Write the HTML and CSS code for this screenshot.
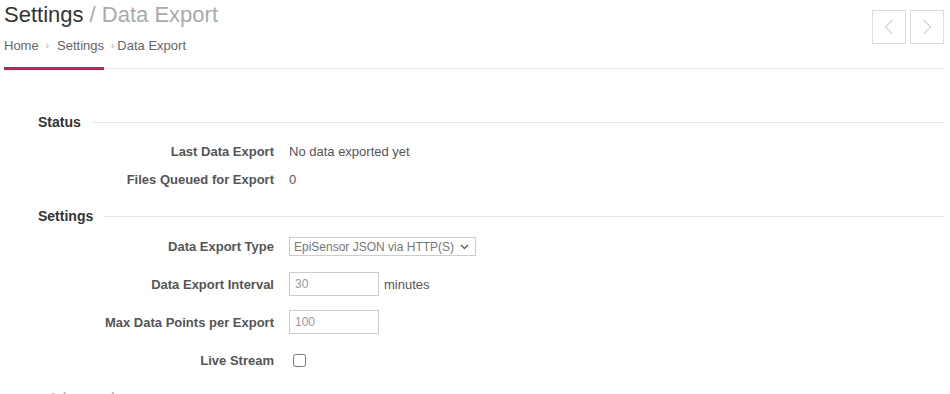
FILE: index.html
```html
<!DOCTYPE html>
<html lang="en">
<head>
<meta charset="utf-8">
<title>Settings / Data Export</title>
<link rel="stylesheet" href="styles.css">
</head>
<body>
<header class="page-header">
  <div class="titles">
    <h1 class="title">Settings <span class="title-sub">/ Data Export</span></h1>
    <nav class="breadcrumb">
      <a href="#">Home</a><span class="sep sep-first">›</span><a href="#">Settings</a><span class="sep sep-last">›</span><span class="current">Data Export</span>
    </nav>
  </div>
  <div class="pager">
    <button class="pager-btn" aria-label="Previous">
      <svg width="10" height="16" viewBox="0 0 10 16"><polyline points="8.5,1 1.5,8 8.5,15" fill="none" stroke="#b5b5b5" stroke-width="1"/></svg>
    </button>
    <button class="pager-btn" aria-label="Next">
      <svg width="10" height="16" viewBox="0 0 10 16"><polyline points="1.5,1 8.5,8 1.5,15" fill="none" stroke="#b5b5b5" stroke-width="1"/></svg>
    </button>
  </div>
</header>
<div class="tabbar"><div class="tab"></div></div>

<main class="content">
  <section class="section">
    <h2 class="section-title"><span>Status</span></h2>
    <div class="row short">
      <div class="label">Last Data Export</div>
      <div class="value">No data exported yet</div>
    </div>
    <div class="row short">
      <div class="label">Files Queued for Export</div>
      <div class="value">0</div>
    </div>
  </section>

  <section class="section settings">
    <h2 class="section-title"><span>Settings</span></h2>
    <div class="row first">
      <div class="label">Data Export Type</div>
      <div class="value">
        <span class="select-wrap">
          <select class="select">
            <option>EpiSensor JSON via HTTP(S)</option>
          </select>
          <svg class="select-arrow" width="9" height="6" viewBox="0 0 9 6"><polyline points="1,1 4.5,4.5 8,1" fill="none" stroke="#666" stroke-width="1.5"/></svg>
        </span>
      </div>
    </div>
    <div class="row">
      <div class="label">Data Export Interval</div>
      <div class="value"><input class="input" type="text" value="30"><span class="unit">minutes</span></div>
    </div>
    <div class="row">
      <div class="label">Max Data Points per Export</div>
      <div class="value"><input class="input" type="text" value="100"></div>
    </div>
    <div class="row">
      <div class="label">Live Stream</div>
      <div class="value"><input class="checkbox" type="checkbox"></div>
    </div>
  </section>

  <section class="section advanced">
    <h2 class="section-title"><span>Advanced</span></h2>
  </section>
</main>
</body>
</html>
```
FILE: styles.css
```css
html {
  overflow: hidden;
}
body {
  margin: 0;
  background: #fff;
  font-family: "Liberation Sans", Arial, Helvetica, sans-serif;
  color: #555;
}
.page-header {
  display: flex;
  justify-content: space-between;
  align-items: flex-start;
  padding: 0 6px 0 4px;
}
.title {
  margin: 2px 0 0;
  font-size: 22px;
  line-height: 26px;
  font-weight: normal;
  color: #333;
}
.title-sub {
  color: #aaa;
}
.breadcrumb {
  margin-top: 8px;
  font-size: 13px;
  line-height: 19px;
  color: #666;
}
.breadcrumb a {
  color: #666;
  text-decoration: none;
}
.breadcrumb .sep {
  display: inline-block;
  font-size: 10px;
  color: #aaa;
  vertical-align: 1px;
}
.breadcrumb .sep-first {
  margin: 0 8px 0 7px;
}
.breadcrumb .sep-last {
  margin: 0 3px 0 7px;
}
.pager {
  display: flex;
  gap: 4px;
  margin-top: 10px;
}
.pager-btn {
  width: 34px;
  height: 34px;
  padding: 0;
  border: 1px solid #ddd;
  background: #fff;
  display: flex;
  align-items: center;
  justify-content: center;
}
.tabbar {
  display: flex;
  margin: 12px 6px 0 4px;
  border-bottom: 1px solid #e6e6e6;
}
.tab {
  width: 100px;
  height: 0;
  border-bottom: 3px solid #d0195b;
  margin-bottom: -2px;
}
.content {
  padding: 43px 6px 0 38px;
}
.section-title {
  display: flex;
  align-items: center;
  margin: 0;
  height: 20px;
  font-size: 14px;
  font-weight: bold;
  color: #333;
}
.section-title::after {
  content: "";
  flex: 1;
  height: 1px;
  margin-left: 11px;
  background: #e8e8e8;
}
.row {
  display: grid;
  grid-template-columns: 236px 1fr;
  column-gap: 15px;
  align-items: center;
  height: 38px;
  font-size: 13px;
}
.row.first {
  height: 37px;
}
.row.short {
  height: 28px;
}
.section .row.short:first-of-type {
  margin-top: 5px;
}
.label {
  text-align: right;
  font-weight: bold;
  color: #555;
}
.value {
  display: flex;
  align-items: center;
  color: #555;
}
.settings {
  margin-top: 13px;
}
.settings .section-title {
  margin-bottom: 2px;
}
.select-wrap {
  position: relative;
  display: inline-block;
}
.select {
  appearance: none;
  -webkit-appearance: none;
  width: 187px;
  height: 19px;
  margin: 0;
  padding: 0 0 0 4px;
  border: 1px solid #ccc;
  border-radius: 0;
  background: #fff;
  font-family: "Liberation Sans", Arial, sans-serif;
  font-size: 12px;
  color: #777;
  display: block;
}
.select-arrow {
  position: absolute;
  right: 7px;
  top: 7px;
  pointer-events: none;
}
.input {
  box-sizing: border-box;
  width: 90px;
  height: 24px;
  margin: 0;
  padding: 0 5px;
  border: 1px solid #ccc;
  border-radius: 0;
  font-family: "Liberation Sans", Arial, sans-serif;
  font-size: 12px;
  color: #999;
}
.unit {
  margin-left: 5px;
}
.checkbox {
  margin: 0 0 0 4px;
  width: 13px;
  height: 13px;
}
.advanced {
  margin-top: 9px;
  padding-left: 10px;
}
.advanced .section-title {
  color: #bbb;
}
.advanced .section-title::after {
  display: none;
}
```
